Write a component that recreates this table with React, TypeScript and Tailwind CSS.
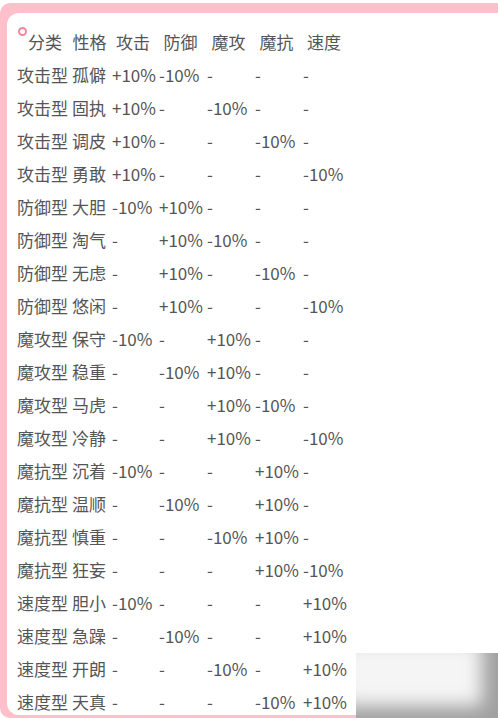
const cols = ['分类', '性格', '攻击', '防御', '魔攻', '魔抗', '速度']

const rows: string[][] = [
  ['攻击型', '孤僻', '+10%', '-10%', '-', '-', '-'],
  ['攻击型', '固执', '+10%', '-', '-10%', '-', '-'],
  ['攻击型', '调皮', '+10%', '-', '-', '-10%', '-'],
  ['攻击型', '勇敢', '+10%', '-', '-', '-', '-10%'],
  ['防御型', '大胆', '-10%', '+10%', '-', '-', '-'],
  ['防御型', '淘气', '-', '+10%', '-10%', '-', '-'],
  ['防御型', '无虑', '-', '+10%', '-', '-10%', '-'],
  ['防御型', '悠闲', '-', '+10%', '-', '-', '-10%'],
  ['魔攻型', '保守', '-10%', '-', '+10%', '-', '-'],
  ['魔攻型', '稳重', '-', '-10%', '+10%', '-', '-'],
  ['魔攻型', '马虎', '-', '-', '+10%', '-10%', '-'],
  ['魔攻型', '冷静', '-', '-', '+10%', '-', '-10%'],
  ['魔抗型', '沉着', '-10%', '-', '-', '+10%', '-'],
  ['魔抗型', '温顺', '-', '-10%', '-', '+10%', '-'],
  ['魔抗型', '慎重', '-', '-', '-10%', '+10%', '-'],
  ['魔抗型', '狂妄', '-', '-', '-', '+10%', '-10%'],
  ['速度型', '胆小', '-10%', '-', '-', '-', '+10%'],
  ['速度型', '急躁', '-', '-10%', '-', '-', '+10%'],
  ['速度型', '开朗', '-', '-', '-10%', '-', '+10%'],
  ['速度型', '天真', '-', '-', '-', '-10%', '+10%'],
]

const grid = 'grid grid-cols-[55px_40px_47px_48px_48px_48px_60px]'

export default function App() {
  return (
    <div
      className="relative w-[498px] h-[718px] overflow-hidden bg-white pt-[3px] text-[#555] text-[17px]"
      style={{ fontFamily: '"Noto Sans CJK SC", "Noto Sans", sans-serif' }}
    >
      {/* 粉色边框 */}
      <div className="h-[715px] bg-[#ffc0cb] rounded-tl-[10px] rounded-bl-[10px] pt-[10px] pl-[7px]">
        <div className="h-[702px] bg-white rounded-tl-[12px] rounded-bl-[12px] pt-[12px] pl-[10px]">
          {/* 表头 */}
          <div className={`${grid} h-[33px] leading-[33px]`}>
            <div className="flex items-start">
              <span className="mt-[2px] ml-[1px] w-[9px] h-[9px] rounded-full border-2 border-[#f0869c] shrink-0" />
              <span className="ml-[1px]">{cols[0]}</span>
            </div>
            {cols.slice(1).map((c, i) => (
              <div key={c} className={i === 5 ? 'pl-[4px]' : 'text-center pr-[5px]'}>
                {c}
              </div>
            ))}
          </div>

          {/* 数据行 */}
          {rows.map((r, i) => (
            <div key={i} className={`${grid} h-[33px] leading-[33px]`}>
              {r.map((v, j) => (
                <div key={j} className="whitespace-nowrap">
                  {v}
                </div>
              ))}
            </div>
          ))}
        </div>
      </div>

      {/* 右下角水印 */}
      <div className="absolute left-[356px] top-[653px] w-[142px] h-[65px] bg-[#f5f5f5] shadow-[inset_-16px_-12px_18px_rgba(0,0,0,0.35)]" />
    </div>
  )
}
